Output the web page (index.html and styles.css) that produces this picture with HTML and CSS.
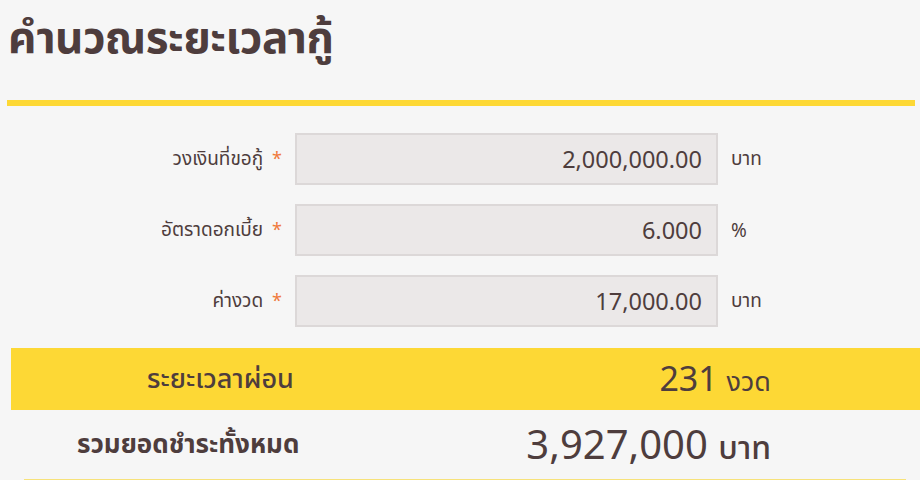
FILE: index.html
```html
<!DOCTYPE html>
<html lang="th">
<head>
  <meta charset="UTF-8" />
  <title>คำนวณระยะเวลากู้</title>
  <link rel="stylesheet" href="styles.css">
</head>
<body>
  <header class="page-head">
    <h1>คำนวณระยะเวลากู้</h1>
  </header>
  <div class="head-rule"></div>

  <!-- Input form -->
  <form class="calc-form" onsubmit="return false">
    <label class="field-label" for="amount">วงเงินที่ขอกู้ <span class="req">*</span></label>
    <input class="field-input" id="amount" type="text" value="2,000,000.00" />
    <span class="field-unit">บาท</span>

    <label class="field-label" for="rate">อัตราดอกเบี้ย <span class="req">*</span></label>
    <input class="field-input" id="rate" type="text" value="6.000" />
    <span class="field-unit">%</span>

    <label class="field-label" for="pay">ค่างวด <span class="req">*</span></label>
    <input class="field-input" id="pay" type="text" value="17,000.00" />
    <span class="field-unit">บาท</span>
  </form>

  <!-- Results -->
  <section class="result">
    <div class="result-row highlight">
      <span class="result-label">ระยะเวลาผ่อน</span>
      <span class="result-value">231 <small>งวด</small></span>
    </div>
    <div class="result-row total">
      <span class="result-label">รวมยอดชำระทั้งหมด</span>
      <span class="result-value">3,927,000 <small>บาท</small></span>
    </div>
  </section>
</body>
</html>
```

FILE: styles.css
```css
:root{
  --brown:#4e3d3d;
  --yellow:#fdd835;
  --bg:#f6f6f6;
}
*{box-sizing:border-box;margin:0;padding:0}
body{
  font-family:"Noto Sans","Noto Sans Thai",sans-serif;
  background:var(--bg);
  color:var(--brown);
  width:920px;
  height:480px;
  overflow:hidden;
}

/* ── Title ─────────────────────────────── */
.page-head{padding:6px 0 0 8px;height:100px}
.page-head h1{font-size:44px;font-weight:700;line-height:60px;letter-spacing:-.5px}
.head-rule{height:6px;margin:0 5px 0 7px;background:var(--yellow)}

/* ── Form ──────────────────────────────── */
.calc-form{
  display:grid;
  grid-template-columns:282px 424px auto;
  column-gap:12px;
  row-gap:19px;
  align-items:center;
  margin:27px 0 0 0;
}
.field-label{text-align:right;font-size:19px}
.req{color:#f07a3c;margin-left:4px;font-size:18px}
.field-input{
  height:52px;
  margin-left:1px;
  background:#ebe8e8;
  border:2px solid #dcd8d8;
  font-family:inherit;
  font-size:23.5px;
  color:var(--brown);
  text-align:right;
  padding:0 14px;
  outline:none;
}
.field-unit{font-size:19px;padding-left:1px}

/* ── Results ───────────────────────────── */
.result{margin-top:21px}
.result-row{
  display:flex;
  justify-content:space-between;
  align-items:center;
}
.result-row.highlight{
  margin-left:11px;
  height:62px;
  background:var(--yellow);
  padding:0 149px 0 136px;
}
.result-row.highlight .result-label{font-size:27px;font-weight:500}
.result-row.highlight .result-value{font-size:34px}
.result-row.highlight small{font-size:27px}
.result-row.total{
  height:71px;
  margin:0 14px 0 24px;
  padding:0 135px 0 53px;
  border-bottom:2px solid #f7e27a;
}
.result-row.total .result-label{font-size:26px;font-weight:700}
.result-row.total .result-value{font-size:40px}
.result-row.total small{font-size:32px;font-weight:500}
```
